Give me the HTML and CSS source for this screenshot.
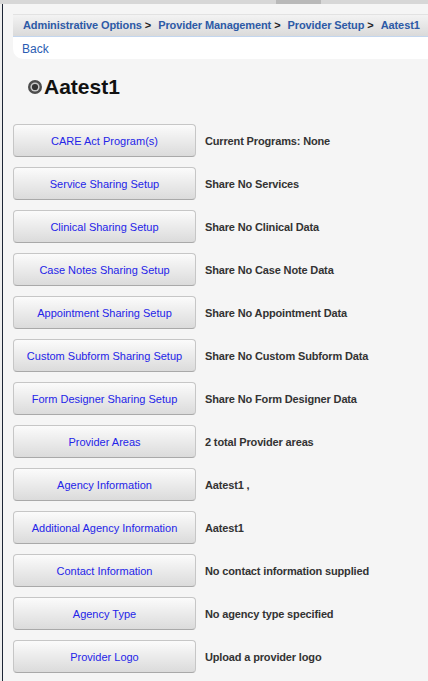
FILE: index.html
```html
<!DOCTYPE html>
<html lang="en">

<head>
    <meta charset="UTF-8">
    <meta name="viewport" content="width=device-width, initial-scale=1.0">
    <link rel="stylesheet" href="styles.css">
    <title>Provider Setup - Aatest1</title>
</head>

<body>

    <div class="top-strip">
        <div class="top-tab"></div>
    </div>

    <div class="frame">
        <div class="crumbs">
            <a href="#">Administrative Options</a><span class="sep">&gt;</span><a href="#">Provider Management</a><span class="sep">&gt;</span><a href="#">Provider Setup</a><span class="sep">&gt;</span><a href="#">Aatest1</a>
        </div>
        <div class="back-box">
            <a href="#">Back</a>
        </div>

        <h1 class="provider-title">
            <svg class="title-icon" width="16" height="16" viewBox="0 0 16 16">
                <circle cx="8" cy="8" r="7" fill="#4d4d4d" />
                <circle cx="8" cy="8" r="4.6" fill="#c9c9c9" />
                <circle cx="8" cy="8" r="3.1" fill="#333" />
            </svg>
            Aatest1
        </h1>

        <div class="setup-list">
            <div class="setup-row">
                <button class="setup-btn">CARE Act Program(s)</button>
                <span class="setup-info">Current Programs: None</span>
            </div>
            <div class="setup-row">
                <button class="setup-btn">Service Sharing Setup</button>
                <span class="setup-info">Share No Services</span>
            </div>
            <div class="setup-row">
                <button class="setup-btn">Clinical Sharing Setup</button>
                <span class="setup-info">Share No Clinical Data</span>
            </div>
            <div class="setup-row">
                <button class="setup-btn">Case Notes Sharing Setup</button>
                <span class="setup-info">Share No Case Note Data</span>
            </div>
            <div class="setup-row">
                <button class="setup-btn">Appointment Sharing Setup</button>
                <span class="setup-info">Share No Appointment Data</span>
            </div>
            <div class="setup-row">
                <button class="setup-btn">Custom Subform Sharing Setup</button>
                <span class="setup-info">Share No Custom Subform Data</span>
            </div>
            <div class="setup-row">
                <button class="setup-btn">Form Designer Sharing Setup</button>
                <span class="setup-info">Share No Form Designer Data</span>
            </div>
            <div class="setup-row">
                <button class="setup-btn">Provider Areas</button>
                <span class="setup-info">2 total Provider areas</span>
            </div>
            <div class="setup-row">
                <button class="setup-btn">Agency Information</button>
                <span class="setup-info">Aatest1 ,</span>
            </div>
            <div class="setup-row">
                <button class="setup-btn">Additional Agency Information</button>
                <span class="setup-info">Aatest1</span>
            </div>
            <div class="setup-row">
                <button class="setup-btn">Contact Information</button>
                <span class="setup-info">No contact information supplied</span>
            </div>
            <div class="setup-row">
                <button class="setup-btn">Agency Type</button>
                <span class="setup-info">No agency type specified</span>
            </div>
            <div class="setup-row">
                <button class="setup-btn">Provider Logo</button>
                <span class="setup-info">Upload a provider logo</span>
            </div>
        </div>
    </div>

</body>

</html>
```

FILE: styles.css
```css
html,
body {
    margin: 0;
    padding: 0;
}

body {
    background-color: #eeeeee;
    font-family: "Liberation Sans", Arial, sans-serif;
    overflow: hidden;
}

.top-strip {
    height: 4px;
    background-color: #d7d7d7;
    display: flex;
}

.top-tab {
    width: 45px;
    margin-left: 276px;
    background-color: #b9b9b9;
}

.frame {
    margin-left: 2px;
    border-left: 1px solid #1d2636;
    background-color: #f5f5f5;
    padding: 10px 0 20px 10px;
    min-height: 700px;
}

.crumbs {
    height: 21px;
    line-height: 21px;
    padding-left: 10px;
    white-space: nowrap;
    overflow: hidden;
    font-size: 11px;
    font-weight: bold;
    letter-spacing: -0.1px;
    border-top: 1px solid #e2e2e2;
    border-bottom: 1px solid #c3d6ee;
    background: linear-gradient(to bottom, #f3f3f3, #dadada);
}

.crumbs a {
    color: #2d5aa6;
    text-decoration: none;
}

.crumbs .sep {
    color: #222;
    margin: 0 7px 0 3px;
}

.back-box {
    height: 22px;
    line-height: 22px;
    padding-left: 9px;
    background-color: #fff;
    border-radius: 0 0 0 10px;
}

.back-box a {
    color: #2a5cb2;
    font-size: 12px;
    text-decoration: none;
}

.provider-title {
    display: flex;
    align-items: center;
    margin: 16px 0 25px 14px;
    font-size: 21px;
    line-height: 24px;
    font-weight: bold;
    color: #111;
}

.title-icon {
    margin-right: 1px;
}

.setup-list {
    display: flex;
    flex-direction: column;
    gap: 10px;
}

.setup-row {
    display: flex;
    align-items: center;
    gap: 9px;
}

.setup-btn {
    width: 183px;
    height: 33px;
    padding: 0;
    font-family: "Liberation Sans", Arial, sans-serif;
    font-size: 11px;
    color: #2424e8;
    background: linear-gradient(to bottom, #fbfbfb, #dbdbdb);
    border: 1px solid #c6c6c6;
    border-bottom-color: #a9a9a9;
    border-radius: 4px;
    cursor: pointer;
}

.setup-info {
    font-size: 11px;
    font-weight: bold;
    letter-spacing: -0.15px;
    color: #333;
}
```
